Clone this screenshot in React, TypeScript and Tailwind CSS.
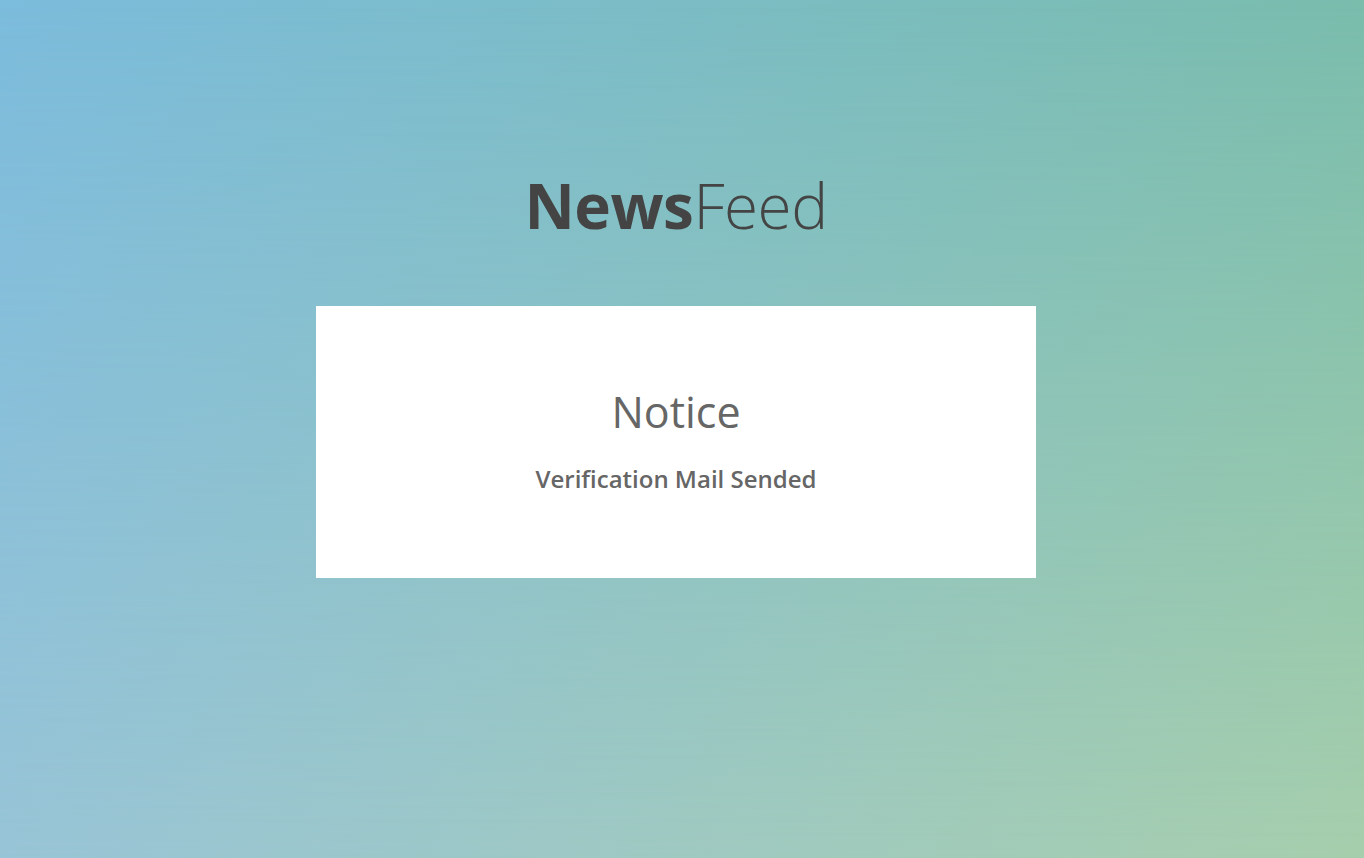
import React from "react";

const App: React.FC = () => {
  return (
    <div className="grid h-[858px] w-full overflow-hidden font-['Open_Sans',sans-serif]">
      <div className="col-start-1 row-start-1 bg-[linear-gradient(to_right,#7cbcdc,#7abdad)]" />
      <div className="col-start-1 row-start-1 bg-[linear-gradient(to_right,#98c4d6,#a6ceac)] [mask-image:linear-gradient(to_bottom,transparent,black)]" />
      <div className="relative col-start-1 row-start-1 flex flex-col items-center pr-[12px] pt-[174px]">
        <h1 className="text-[62px] leading-none tracking-[-0.5px] text-[#444444]">
          <span className="font-bold">News</span>
          <span className="font-light">Feed</span>
        </h1>
        <div className="mt-[70px] flex h-[272px] w-[720px] flex-col items-center bg-white pt-[84px]">
          <h2 className="text-[43px] leading-none text-[#666666]">Notice</h2>
          <p className="mt-[34px] text-[24px] font-semibold leading-none text-[#666666]">
            Verification Mail Sended
          </p>
        </div>
      </div>
    </div>
  );
};

export default App;
